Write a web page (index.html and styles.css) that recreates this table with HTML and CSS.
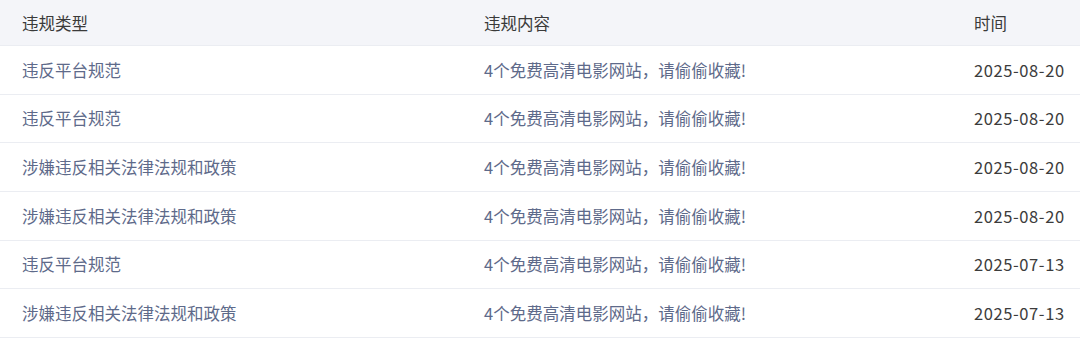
FILE: index.html
```html
<!DOCTYPE html>
<html lang="zh-CN">
<head>
<meta charset="utf-8">
<link rel="stylesheet" href="styles.css">
</head>
<body>
<div class="table">
  <div class="row head">
    <div class="cell">违规类型</div>
    <div class="cell">违规内容</div>
    <div class="cell">时间</div>
  </div>
  <div class="row">
    <div class="cell type">违反平台规范</div>
    <div class="cell content">4个免费高清电影网站，请偷偷收藏!</div>
    <div class="cell date">2025-08-20</div>
  </div>
  <div class="row">
    <div class="cell type">违反平台规范</div>
    <div class="cell content">4个免费高清电影网站，请偷偷收藏!</div>
    <div class="cell date">2025-08-20</div>
  </div>
  <div class="row">
    <div class="cell type">涉嫌违反相关法律法规和政策</div>
    <div class="cell content">4个免费高清电影网站，请偷偷收藏!</div>
    <div class="cell date">2025-08-20</div>
  </div>
  <div class="row">
    <div class="cell type">涉嫌违反相关法律法规和政策</div>
    <div class="cell content">4个免费高清电影网站，请偷偷收藏!</div>
    <div class="cell date">2025-08-20</div>
  </div>
  <div class="row">
    <div class="cell type">违反平台规范</div>
    <div class="cell content">4个免费高清电影网站，请偷偷收藏!</div>
    <div class="cell date">2025-07-13</div>
  </div>
  <div class="row">
    <div class="cell type">涉嫌违反相关法律法规和政策</div>
    <div class="cell content">4个免费高清电影网站，请偷偷收藏!</div>
    <div class="cell date">2025-07-13</div>
  </div>
</div>
</body>
</html>
```
FILE: styles.css
```css
html, body {
  margin: 0;
  padding: 0;
  background: #ffffff;
}
body {
  font-family: "Noto Sans CJK SC", "Noto Sans", sans-serif;
  font-size: 16.5px;
}
.table {
  width: 1080px;
}
.row {
  display: grid;
  grid-template-columns: 462px 490px 128px;
  height: 47.67px;
  align-items: center;
  border-bottom: 1px solid #ebedf2;
}
.row.head {
  height: 45px;
  background: #f4f5f9;
  color: #3a3a3a;
}
.cell {
  padding-left: 22px;
  white-space: nowrap;
}
.type, .content {
  color: #5e6a8a;
}
.date {
  color: #3c3c3c;
  letter-spacing: 0.6px;
}
```
